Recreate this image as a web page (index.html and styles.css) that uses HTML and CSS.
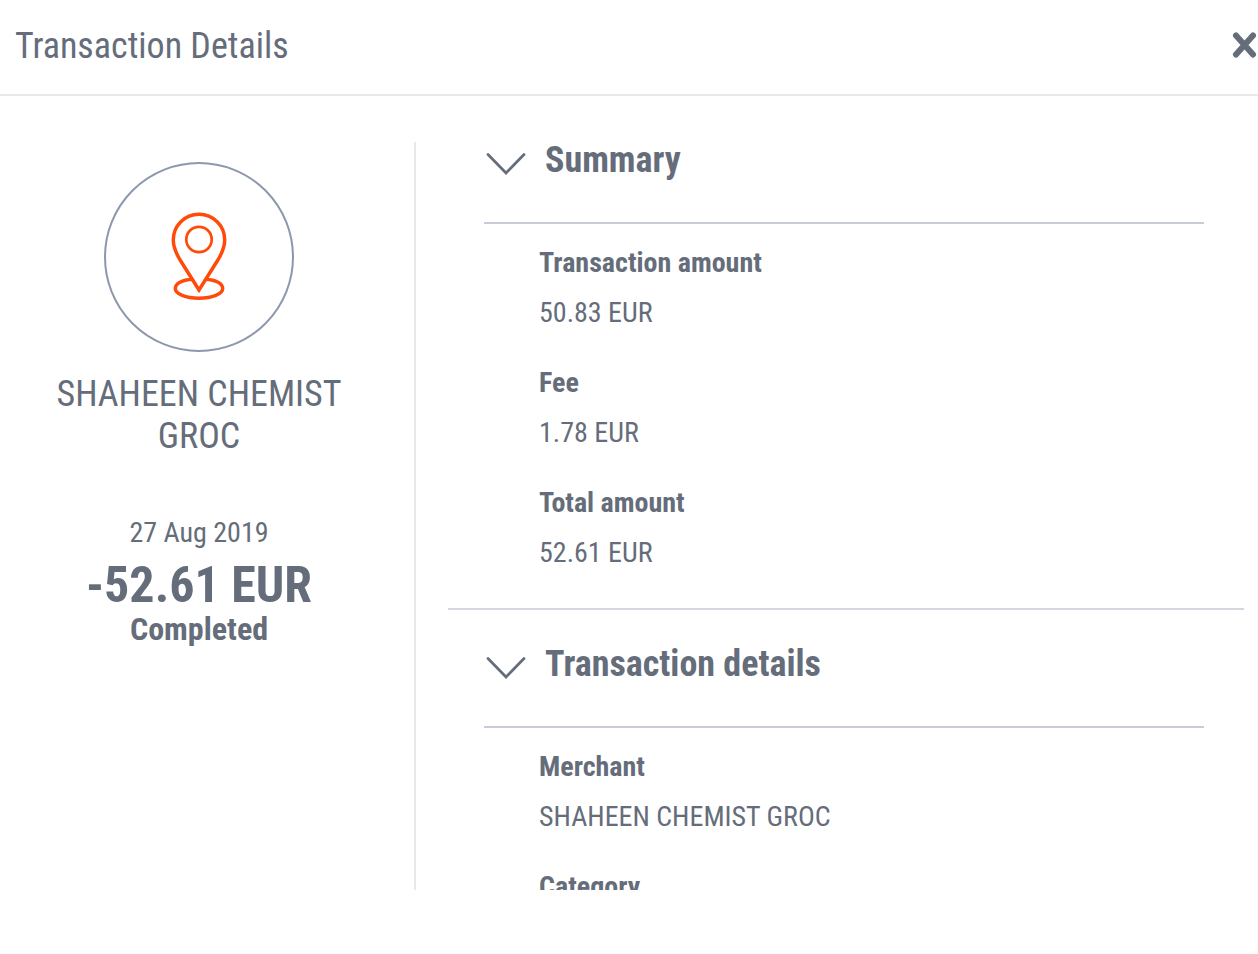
FILE: index.html
```
<!DOCTYPE html>
<html lang="en">
<head>
  <meta charset="utf-8">
  <title>Transaction Details</title>
  <link rel="stylesheet" href="styles.css">
</head>
<body>
  <header class="modal-header">
    <h1 class="modal-title">Transaction Details</h1>
    <button class="close" type="button" aria-label="Close">
      <svg viewBox="0 0 28 28" width="28" height="28"><path d="M6 3.500L23 22.500M23 3.500L6 22.500"/></svg>
    </button>
  </header>

  <main class="modal-body">
    <aside class="overview">
      <div class="icon-circle">
        <svg viewBox="0 0 60 92" width="60" height="92">
          <path d="M30 79L10.500 48C6.500 41 4.300 35 4.300 29a25.700 25.700 0 0 1 51.400 0C55.700 35 53.500 41 49.500 48z"/>
          <circle class="thin" cx="30" cy="28.500" r="12.700"/>
          <path d="M23.500 68.300C13 69 6.300 72.500 6.300 77.500c0 5.500 10.500 9.700 23.700 9.700s23.700-4.200 23.700-9.700c0-5-6.700-8.500-17.200-9.200"/>
        </svg>
      </div>
      <p class="merchant">SHAHEEN CHEMIST GROC</p>
      <p class="date">27 Aug 2019</p>
      <p class="amount">-52.61 EUR</p>
      <p class="status">Completed</p>
    </aside>

    <div class="details">
      <section class="panel">
        <h2 class="panel-title">
          <button class="toggle" type="button" aria-expanded="true">
            <svg viewBox="0 0 42 32" width="42" height="32"><path d="M4 10.500L22 29L40 10.500"/></svg>
            Summary
          </button>
        </h2>
        <dl class="fields">
          <dt>Transaction amount</dt>
          <dd>50.83 EUR</dd>
          <dt>Fee</dt>
          <dd>1.78 EUR</dd>
          <dt>Total amount</dt>
          <dd>52.61 EUR</dd>
        </dl>
      </section>
      <section class="panel">
        <h2 class="panel-title">
          <button class="toggle" type="button" aria-expanded="true">
            <svg viewBox="0 0 42 32" width="42" height="32"><path d="M4 10.500L22 29L40 10.500"/></svg>
            Transaction details
          </button>
        </h2>
        <dl class="fields">
          <dt>Merchant</dt>
          <dd>SHAHEEN CHEMIST GROC</dd>
          <dt>Category</dt>
        </dl>
      </section>
    </div>
  </main>
</body>
</html>
```
FILE: styles.css
```
* {
  box-sizing: border-box;
}

body {
  margin: 0;
  height: 100vh;
  display: flex;
  flex-direction: column;
  background: #fff;
  color: #656d7b;
  font-family: "Roboto Condensed", Roboto, sans-serif;
  font-size: 28px;
  line-height: 32px;
}

h1, h2, p, dl, dd {
  margin: 0;
}

button {
  padding: 0;
  border: 0;
  background: none;
  color: inherit;
  font: inherit;
  cursor: pointer;
}

.modal-header {
  display: flex;
  flex: none;
  align-items: center;
  justify-content: space-between;
  height: 96px;
  padding: 0 0 2px 15px;
  border-bottom: 2px solid #e8e8e8;
}

.modal-title {
  font-size: 36px;
  font-weight: 400;
}

.close svg {
  display: block;
  fill: none;
  stroke: #656d7b;
  stroke-width: 6;
  stroke-linecap: round;
}

.modal-body {
  display: flex;
  flex: 1;
  min-height: 0;
  margin: 46px 0 64px;
}

.overview {
  flex: 0 0 416px;
  padding: 20px 16px 0 0;
  border-right: 2px solid #e8e8e8;
  text-align: center;
}

.icon-circle {
  display: flex;
  align-items: center;
  justify-content: center;
  width: 190px;
  height: 190px;
  margin: 0 auto 21px;
  border: 2px solid #8c98ac;
  border-radius: 50%;
}

.icon-circle svg {
  fill: none;
  stroke: #ff4b0a;
  stroke-width: 3.5;
}

.icon-circle .thin {
  stroke-width: 2.7;
}

.merchant {
  padding: 0 32px;
  font-size: 36px;
  line-height: 42px;
}

.date {
  margin: 60px 0 8px;
}

.amount {
  font-size: 50px;
  font-weight: 700;
  line-height: 56px;
}

.status {
  font-size: 32px;
  font-weight: 700;
}

.details {
  flex: 1;
  padding: 0 14px 0 32px;
  overflow-y: auto;
  scrollbar-width: none;
}

.panel {
  padding: 0 40px 0 36px;
}

.panel + .panel {
  border-top: 2px solid #d4d7df;
  padding-top: 36px;
}

.panel-title {
  height: 82px;
  border-bottom: 2px solid #c8cbd8;
  font-size: 36px;
  font-weight: 700;
  line-height: 36px;
}

.toggle {
  display: flex;
  align-items: center;
  gap: 19px;
}

.toggle svg {
  fill: none;
  stroke: #656d7b;
  stroke-width: 2.7;
  stroke-linecap: round;
}

.fields {
  padding: 23px 55px 39px;
}

.fields dt {
  font-weight: 700;
}

.fields dd {
  margin: 18px 0 38px;
}

.fields dd:last-child {
  margin-bottom: 0;
}
```
